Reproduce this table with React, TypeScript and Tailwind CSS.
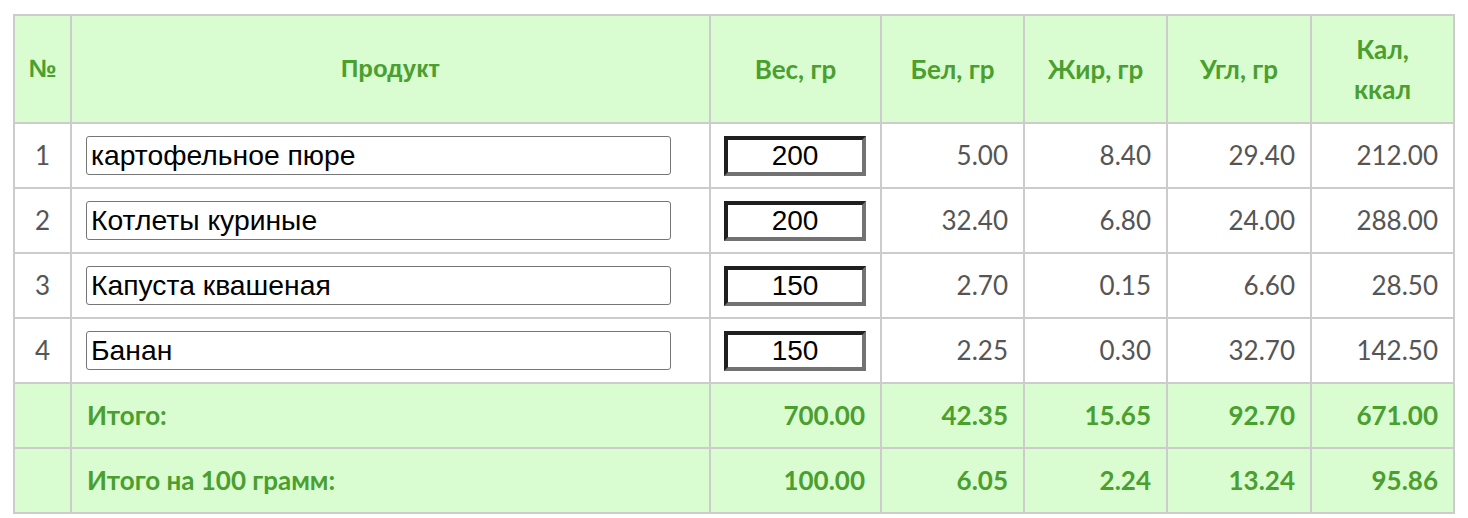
import React from "react";

const rows = [
  { n: 1, name: "картофельное пюре", w: "200", b: "5.00", f: "8.40", u: "29.40", k: "212.00" },
  { n: 2, name: "Котлеты куриные", w: "200", b: "32.40", f: "6.80", u: "24.00", k: "288.00" },
  { n: 3, name: "Капуста квашеная", w: "150", b: "2.70", f: "0.15", u: "6.60", k: "28.50" },
  { n: 4, name: "Банан", w: "150", b: "2.25", f: "0.30", u: "32.70", k: "142.50" },
];

const totals = [
  { label: "Итого:", w: "700.00", b: "42.35", f: "15.65", u: "92.70", k: "671.00" },
  { label: "Итого на 100 грамм:", w: "100.00", b: "6.05", f: "2.24", u: "13.24", k: "95.86" },
];

const pt = "font-['Lato','Noto_Sans',sans-serif]";

export default function App() {
  return (
    <div className="w-[1468px] h-[518px] bg-white overflow-hidden">
      <table
        className={`ml-[13px] mt-[14px] w-[1442px] table-fixed border-collapse ${pt}`}
      >
        <colgroup>
          <col className="w-[57px]" />
          <col className="w-[639px]" />
          <col className="w-[171px]" />
          <col className="w-[143px]" />
          <col className="w-[143px]" />
          <col className="w-[144px]" />
          <col className="w-[143px]" />
        </colgroup>
        <thead>
          <tr className="h-[108px] bg-[#d9fcd0] text-[#4a9f2f]">
            <th className="border-2 border-[#cccccc] text-center align-middle font-['Liberation_Sans','Arial',sans-serif] text-[25px] font-bold">
              №
            </th>
            <th className="border-2 border-[#cccccc] text-center align-middle font-['Liberation_Sans','Arial',sans-serif] text-[24px] font-bold">
              Продукт
            </th>
            <th className="border-2 border-[#cccccc] text-center align-middle text-[26px] font-bold">Вес, гр</th>
            <th className="border-2 border-[#cccccc] text-center align-middle text-[26px] font-bold">Бел, гр</th>
            <th className="border-2 border-[#cccccc] text-center align-middle text-[26px] font-bold">Жир, гр</th>
            <th className="border-2 border-[#cccccc] text-center align-middle text-[26px] font-bold">Угл, гр</th>
            <th className="border-2 border-[#cccccc] text-center align-middle text-[26px] font-bold leading-[40px]">
              Кал,
              <br />
              ккал
            </th>
          </tr>
        </thead>
        <tbody>
          {rows.map((r) => (
            <tr key={r.n} className="h-[65px] text-[#555555] text-[26px]">
              <td className="border-2 border-[#cccccc] text-center align-middle">{r.n}</td>
              <td className="border-2 border-[#cccccc] align-middle px-[14px]">
                <input
                  readOnly
                  value={r.name}
                  className="block w-[585px] h-[39px] border border-[#767676] rounded-[3px] pl-[4px] pr-[4px] bg-white text-black text-[28.3px] font-['Liberation_Sans','Arial',sans-serif] outline-none"
                />
              </td>
              <td className="border-2 border-[#cccccc] align-middle pl-[13px] pr-[13px]">
                <input
                  readOnly
                  value={r.w}
                  className="block w-[142px] h-[40px] border-[4px] border-t-[#1f1f1f] border-l-[#1f1f1f] border-b-[#727272] border-r-[#727272] bg-white text-black text-center text-[28px] font-['Liberation_Sans','Arial',sans-serif] outline-none"
                />
              </td>
              <td className="border-2 border-[#cccccc] text-right align-middle pr-[15px]">{r.b}</td>
              <td className="border-2 border-[#cccccc] text-right align-middle pr-[15px]">{r.f}</td>
              <td className="border-2 border-[#cccccc] text-right align-middle pr-[15px]">{r.u}</td>
              <td className="border-2 border-[#cccccc] text-right align-middle pr-[15px]">{r.k}</td>
            </tr>
          ))}
          {totals.map((t) => (
            <tr key={t.label} className="h-[65px] bg-[#d9fcd0] text-[#4a9f2f] text-[26px] font-bold">
              <td className="border-2 border-[#cccccc]"></td>
              <td className="border-2 border-[#cccccc] align-middle pl-[15px]">{t.label}</td>
              <td className="border-2 border-[#cccccc] text-right align-middle pr-[15px]">{t.w}</td>
              <td className="border-2 border-[#cccccc] text-right align-middle pr-[15px]">{t.b}</td>
              <td className="border-2 border-[#cccccc] text-right align-middle pr-[15px]">{t.f}</td>
              <td className="border-2 border-[#cccccc] text-right align-middle pr-[15px]">{t.u}</td>
              <td className="border-2 border-[#cccccc] text-right align-middle pr-[15px]">{t.k}</td>
            </tr>
          ))}
        </tbody>
      </table>
    </div>
  );
}
